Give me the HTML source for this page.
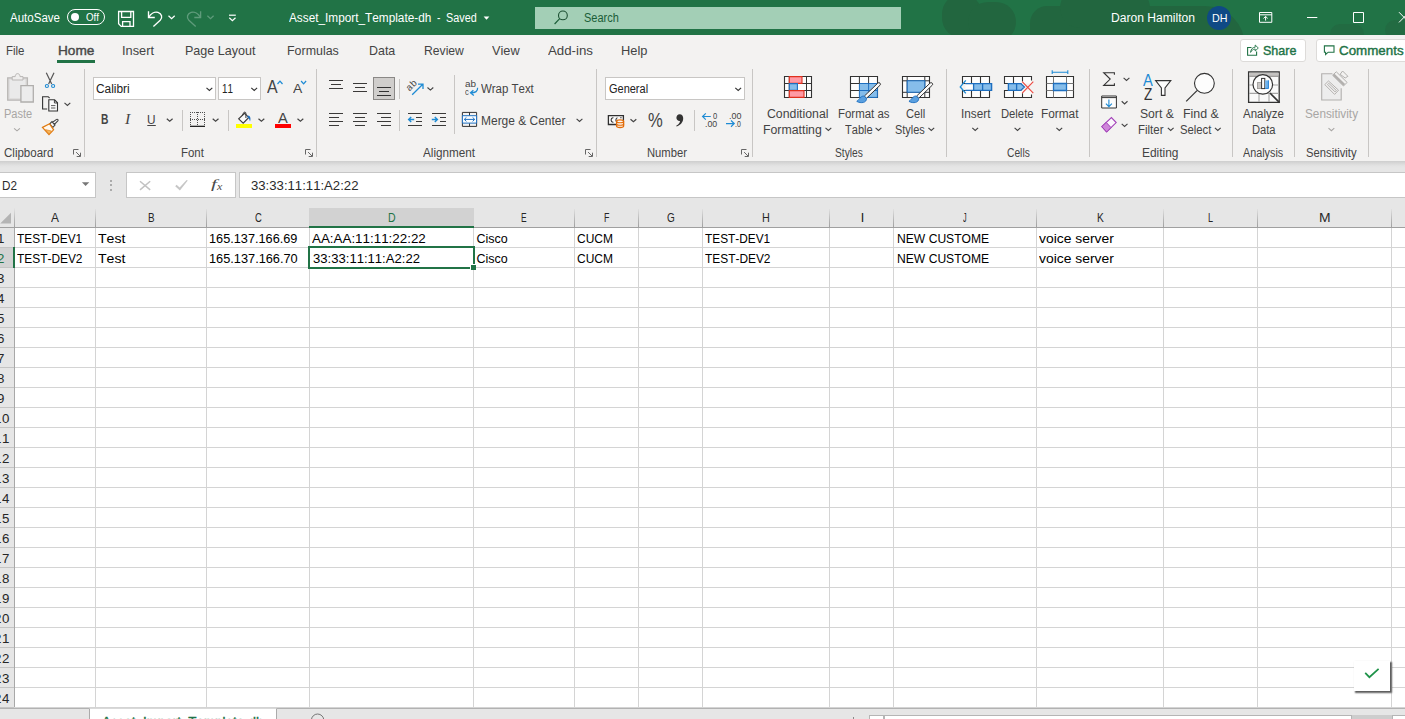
<!DOCTYPE html>
<html lang="en"><head><meta charset="utf-8"><title>Asset_Import_Template-dh - Excel</title>
<style>
html,body{margin:0;padding:0;}
body{width:1405px;height:719px;overflow:hidden;position:relative;background:#fff;
 font-family:"Liberation Sans",sans-serif;font-kerning:none;}
#app{position:absolute;left:0;top:0;width:1405px;height:719px;overflow:hidden;}
.b{position:absolute;box-sizing:border-box;}
.t{position:absolute;white-space:nowrap;line-height:20px;height:20px;transform-origin:0 50%;}
svg.ov{position:absolute;left:0;top:0;}
.sb{-webkit-text-stroke:0.4px currentColor;}
.sf{font-family:"Liberation Serif",serif;}
svg.ov{position:absolute;left:0;top:0;}
</style></head>
<body>
<div id="app">
<div class="b titlebar" style="left:0px;top:0px;width:1405px;height:35px;background:#217346;"></div>
<div class="b" style="left:942px;top:-6px;width:40px;height:44px;background:#22663f;border-radius:20px;"></div>
<div class="b" style="left:968px;top:2px;width:48px;height:40px;background:#22663f;border-radius:22px;"></div>
<div class="b" style="left:1030px;top:6px;width:215px;height:40px;background:#22663f;border-radius:26px 60px 0 0;"></div>
<div class="b" style="left:1060px;top:-12px;width:90px;height:40px;background:#22663f;border-radius:30px;"></div>
<div class="b" style="left:1330px;top:24px;width:34px;height:20px;background:#226b42;border-radius:10px;"></div>
<div class="b" style="left:1385px;top:20px;width:30px;height:20px;background:#226b42;border-radius:10px;"></div>
<span class="t" style="left:10.00px;top:8.00px;font-size:12px;color:#fff;transform:scaleX(0.9612);">AutoSave</span>
<div class="b" style="left:67px;top:9px;width:38px;height:16px;border:1.3px solid #fff;border-radius:8px;"></div>
<div class="b" style="left:71px;top:13px;width:8px;height:8px;background:#fff;border-radius:4px;"></div>
<span class="t" style="left:86.40px;top:8.00px;font-size:10px;color:#fff;transform:scaleX(0.9697);">Off</span>
<span class="t" style="left:289.00px;top:8.00px;font-size:12px;color:#fff;transform:scaleX(0.9833);">Asset_Import_Template-dh</span>
<span class="t" style="left:437.20px;top:8.00px;font-size:12px;color:#fff;transform:scaleX(0.8458);">-</span>
<span class="t" style="left:446.00px;top:8.00px;font-size:12px;color:#fff;transform:scaleX(0.9024);">Saved</span>
<div class="b" style="left:535px;top:7px;width:366px;height:22px;background:#a3cfb6;"></div>
<span class="t" style="left:584.20px;top:8.00px;font-size:12px;color:#1b5e38;transform:scaleX(0.9148);">Search</span>
<span class="t" style="left:1111.40px;top:8.00px;font-size:12px;color:#fff;transform:scaleX(1.0084);">Daron Hamilton</span>
<div class="b" style="left:1207px;top:6px;width:24px;height:24px;background:#0f4a85;border-radius:12px;"></div>
<span class="t" style="left:1211.50px;top:8.00px;font-size:11px;color:#fff;transform:scaleX(0.9751);">DH</span>
<div class="b ribbon" style="left:0px;top:35px;width:1405px;height:126px;background:#f3f2f1;"></div>
<span class="t" style="left:6.20px;top:41.00px;font-size:13px;color:#444;transform:scaleX(0.8839);">File</span>
<span class="t sb" style="left:57.50px;top:41.00px;font-size:13.2px;color:#484848;transform:scaleX(1.0356);">Home</span>
<div class="b" style="left:57px;top:60px;width:38px;height:3px;background:#217346;"></div>
<span class="t" style="left:122.00px;top:41.00px;font-size:13px;color:#444;transform:scaleX(0.9846);">Insert</span>
<span class="t" style="left:185.40px;top:41.00px;font-size:13px;color:#444;transform:scaleX(0.9658);">Page Layout</span>
<span class="t" style="left:286.50px;top:41.00px;font-size:13px;color:#444;transform:scaleX(0.9555);">Formulas</span>
<span class="t" style="left:368.70px;top:41.00px;font-size:13px;color:#444;transform:scaleX(0.9565);">Data</span>
<span class="t" style="left:424.00px;top:41.00px;font-size:13px;color:#444;transform:scaleX(0.9357);">Review</span>
<span class="t" style="left:491.80px;top:41.00px;font-size:13px;color:#444;transform:scaleX(0.9803);">View</span>
<span class="t" style="left:548.00px;top:41.00px;font-size:13px;color:#444;transform:scaleX(1.0211);">Add-ins</span>
<span class="t" style="left:621.30px;top:41.00px;font-size:13px;color:#444;transform:scaleX(0.9882);">Help</span>
<div class="b" style="left:1240px;top:39px;width:66px;height:23px;background:#fff;border:1px solid #dddbd9;border-radius:3px;"></div>
<span class="t sb" style="left:1263.20px;top:41.00px;font-size:13.2px;color:#217346;transform:scaleX(0.9505);">Share</span>
<div class="b" style="left:1316px;top:39px;width:100px;height:23px;background:#fff;border:1px solid #dddbd9;border-radius:3px;"></div>
<span class="t sb" style="left:1339.30px;top:41.00px;font-size:13.2px;color:#217346;transform:scaleX(1.0138);">Comments</span>
<div class="b" style="left:0px;top:161px;width:1405px;height:7px;background:linear-gradient(#cecece,#d9d9d9 35%,#e3e3e3 70%,#e6e6e6);"></div>
<div class="b" style="left:0px;top:168px;width:1405px;height:40px;background:#e6e6e6;"></div>
<div class="b" style="left:-1px;top:172px;width:97px;height:26px;background:#fff;border:1px solid #c6c6c6;"></div>
<span class="t" style="left:2.00px;top:176.00px;font-size:12.5px;color:#2b2b2b;transform:scaleX(0.9375);">D2</span>
<div class="b" style="left:110px;top:179.5px;width:2px;height:2px;background:#ababab;"></div>
<div class="b" style="left:110px;top:184px;width:2px;height:2px;background:#ababab;"></div>
<div class="b" style="left:110px;top:188.5px;width:2px;height:2px;background:#ababab;"></div>
<div class="b" style="left:126px;top:172px;width:110px;height:26px;background:#fff;border:1px solid #c6c6c6;"></div>
<div class="b" style="left:239px;top:172px;width:1170px;height:26px;background:#fff;border:1px solid #c6c6c6;"></div>
<span class="t" style="left:251.40px;top:176.00px;font-size:12.5px;color:#2b2b2b;transform:scaleX(1.0517);">33:33:11:11:A2:22</span>
<div class="b" style="left:0px;top:707px;width:1405px;height:12px;background:#e6e6e6;"></div>
<div class="b" style="left:0px;top:707px;width:1405px;height:1px;background:#a4a4a4;"></div>
<div class="b" style="left:0px;top:708px;width:1405px;height:1px;background:#b2b2b2;"></div>
<div class="b" style="left:89px;top:708px;width:188px;height:12px;background:#fff;border:1px solid #ababab;border-top:1px solid #d9d9d9;border-bottom:none;"></div>
<div class="b" style="left:90px;top:707px;width:186px;height:1px;background:#d0d0d0;"></div>
<span class="t sb" style="left:101.50px;top:712.00px;font-size:13px;color:#217346;transform:scaleX(1.0299);">Asset_Import_Template-dh</span>
<div class="b" style="left:869px;top:715px;width:15px;height:6px;background:#fff;border:1px solid #b5b5b5;"></div>
<div class="b" style="left:884px;top:715px;width:468px;height:6px;background:#fff;border:1px solid #b5b5b5;"></div>
<div class="b" style="left:1352px;top:715px;width:40px;height:6px;background:#cdcdcd;"></div>
<div class="b" style="left:1392px;top:715px;width:14px;height:6px;background:#fff;border:1px solid #b5b5b5;"></div>
<div class="b" style="left:852.5px;top:717px;width:1.5px;height:3px;background:#8a8a8a;"></div>
<span class="t" style="left:4.20px;top:104.00px;font-size:12px;color:#a8a6a4;transform:scaleX(0.9198);">Paste</span>
<span class="t" style="left:3.70px;top:143.00px;font-size:12px;color:#444;transform:scaleX(0.9599);">Clipboard</span>
<div class="b" style="left:84px;top:69px;width:1px;height:88px;background:#c8c6c4;"></div>
<div class="b" style="left:93px;top:77px;width:123px;height:23px;background:#fff;border:1px solid #c8c6c4;"></div>
<span class="t" style="left:96.10px;top:79.00px;font-size:12px;color:#222;transform:scaleX(0.9906);">Calibri</span>
<div class="b" style="left:218px;top:77px;width:43px;height:23px;background:#fff;border:1px solid #c8c6c4;"></div>
<span class="t" style="left:222.00px;top:79.00px;font-size:12px;color:#222;transform:scaleX(0.8173);">11</span>
<span class="t" style="left:180.90px;top:143.00px;font-size:12px;color:#444;transform:scaleX(0.9542);">Font</span>
<div class="b" style="left:316px;top:69px;width:1px;height:88px;background:#c8c6c4;"></div>
<div class="b" style="left:182px;top:110px;width:1px;height:21px;background:#c8c6c4;"></div>
<div class="b" style="left:228px;top:110px;width:1px;height:21px;background:#c8c6c4;"></div>
<div class="b" style="left:373px;top:77px;width:22px;height:23px;background:#d0cecc;border:1px solid #8a8886;"></div>
<div class="b" style="left:399px;top:79px;width:1px;height:20px;background:#c8c6c4;"></div>
<div class="b" style="left:399px;top:110px;width:1px;height:21px;background:#c8c6c4;"></div>
<div class="b" style="left:454px;top:75px;width:1px;height:59px;background:#c8c6c4;"></div>
<span class="t" style="left:481.40px;top:79.00px;font-size:12px;color:#444;transform:scaleX(0.9537);">Wrap Text</span>
<span class="t" style="left:481.40px;top:111.00px;font-size:12px;color:#444;transform:scaleX(0.9974);">Merge &amp; Center</span>
<span class="t" style="left:422.60px;top:143.00px;font-size:12px;color:#444;transform:scaleX(0.9768);">Alignment</span>
<div class="b" style="left:596px;top:69px;width:1px;height:88px;background:#c8c6c4;"></div>
<div class="b" style="left:605px;top:77px;width:140px;height:23px;background:#fff;border:1px solid #c8c6c4;"></div>
<span class="t" style="left:608.70px;top:79.00px;font-size:12px;color:#222;transform:scaleX(0.9153);">General</span>
<span class="t" style="left:647.60px;top:111.00px;font-size:19.3px;color:#444;transform:scaleX(0.8616);">%</span>
<div class="b" style="left:694px;top:110px;width:1px;height:21px;background:#c8c6c4;"></div>
<span class="t" style="left:646.80px;top:143.00px;font-size:12px;color:#444;transform:scaleX(0.9353);">Number</span>
<div class="b" style="left:752px;top:69px;width:1px;height:88px;background:#c8c6c4;"></div>
<span class="t" style="left:767.20px;top:104.00px;font-size:12px;color:#444;transform:scaleX(1.0240);">Conditional</span>
<span class="t" style="left:763.10px;top:120.00px;font-size:12px;color:#444;transform:scaleX(1.0251);">Formatting</span>
<span class="t" style="left:838.40px;top:104.00px;font-size:12px;color:#444;transform:scaleX(0.9537);">Format as</span>
<span class="t" style="left:845.40px;top:120.00px;font-size:12px;color:#444;transform:scaleX(0.9205);">Table</span>
<span class="t" style="left:906.40px;top:104.00px;font-size:12px;color:#444;transform:scaleX(0.9275);">Cell</span>
<span class="t" style="left:895.20px;top:120.00px;font-size:12px;color:#444;transform:scaleX(0.9113);">Styles</span>
<span class="t" style="left:835.40px;top:143.00px;font-size:12px;color:#444;transform:scaleX(0.8532);">Styles</span>
<div class="b" style="left:946px;top:69px;width:1px;height:88px;background:#c8c6c4;"></div>
<span class="t" style="left:960.90px;top:104.00px;font-size:12px;color:#444;transform:scaleX(0.9800);">Insert</span>
<span class="t" style="left:1001.30px;top:104.00px;font-size:12px;color:#444;transform:scaleX(0.9371);">Delete</span>
<span class="t" style="left:1041.20px;top:104.00px;font-size:12px;color:#444;transform:scaleX(0.9847);">Format</span>
<span class="t" style="left:1006.70px;top:143.00px;font-size:12px;color:#444;transform:scaleX(0.8539);">Cells</span>
<div class="b" style="left:1089px;top:69px;width:1px;height:88px;background:#c8c6c4;"></div>
<span class="t" style="left:1139.70px;top:104.00px;font-size:12px;color:#444;transform:scaleX(1.0132);">Sort &amp;</span>
<span class="t" style="left:1138.40px;top:120.00px;font-size:12px;color:#444;transform:scaleX(0.9572);">Filter</span>
<span class="t" style="left:1183.00px;top:104.00px;font-size:12px;color:#444;transform:scaleX(1.0323);">Find &amp;</span>
<span class="t" style="left:1180.30px;top:120.00px;font-size:12px;color:#444;transform:scaleX(0.9412);">Select</span>
<span class="t" style="left:1142.10px;top:143.00px;font-size:12px;color:#444;transform:scaleX(0.9940);">Editing</span>
<div class="b" style="left:1232px;top:69px;width:1px;height:88px;background:#c8c6c4;"></div>
<span class="t" style="left:1243.10px;top:104.00px;font-size:12px;color:#444;transform:scaleX(0.9574);">Analyze</span>
<span class="t" style="left:1252.10px;top:120.00px;font-size:12px;color:#444;transform:scaleX(0.9299);">Data</span>
<span class="t" style="left:1243.10px;top:143.00px;font-size:12px;color:#444;transform:scaleX(0.8993);">Analysis</span>
<div class="b" style="left:1294px;top:69px;width:1px;height:88px;background:#c8c6c4;"></div>
<span class="t" style="left:1304.80px;top:104.00px;font-size:12px;color:#a8a6a4;transform:scaleX(0.9815);">Sensitivity</span>
<span class="t" style="left:1306.40px;top:143.00px;font-size:12px;color:#444;transform:scaleX(0.9370);">Sensitivity</span>
<div class="b" style="left:1368px;top:69px;width:1px;height:88px;background:#c8c6c4;"></div>
<span class="t" style="left:100.60px;top:109.00px;font-size:14.5px;color:#444;transform:scaleX(0.7088);font-weight:bold;">B</span>
<span class="t sf" style="left:124.98px;top:109.00px;font-size:15px;color:#444;transform:scaleX(1.0526);font-style:italic;">I</span>
<span class="t" style="left:147.30px;top:110.00px;font-size:13.6px;color:#444;transform:scaleX(0.8681);">U</span>
<span class="t" style="left:267.00px;top:77.00px;font-size:18.3px;color:#444;transform:scaleX(0.8727);">A</span>
<span class="t" style="left:292.50px;top:79.00px;font-size:13.7px;color:#444;transform:scaleX(1.0132);">A</span>
<span class="t" style="left:278.40px;top:108.00px;font-size:15px;color:#444;transform:scaleX(0.9751);">A</span>
<span class="t" style="left:1143.20px;top:70.00px;font-size:16.3px;color:#1e8bd4;transform:scaleX(0.9065);">A</span>
<span class="t" style="left:1143.50px;top:84.00px;font-size:16.3px;color:#333;transform:scaleX(0.8348);">Z</span>
<span class="t" style="left:712.80px;top:106.00px;font-size:9px;color:#444;transform:scaleX(0.8408);">0</span>
<span class="t" style="left:704.80px;top:114.00px;font-size:9px;color:#444;transform:scaleX(0.9752);">.00</span>
<span class="t" style="left:728.80px;top:106.00px;font-size:9px;color:#444;transform:scaleX(0.9912);">.00</span>
<span class="t" style="left:735.40px;top:114.00px;font-size:9px;color:#444;transform:scaleX(0.7718);">.0</span>
<span class="t" style="left:464.80px;top:74.00px;font-size:9px;color:#444;transform:scaleX(1.1011);">ab</span>
<span class="t" style="left:464.80px;top:82.00px;font-size:9px;color:#444;transform:scaleX(0.8444);">c</span>
<span class="t sf" style="left:211.20px;top:174.00px;font-size:13.5px;color:#4a4a4a;transform:scaleX(1.5752);font-style:italic;">f</span>
<span class="t sf" style="left:217.38px;top:176.00px;font-size:11px;color:#4a4a4a;transform:scaleX(1.0870);font-style:italic;">x</span>
<div class="b" style="left:0px;top:228px;width:1405px;height:479px;background:#fff;"></div>
<div class="b" style="left:0px;top:208px;width:1405px;height:20px;background:#e6e6e6;"></div>
<div class="b" style="left:0px;top:228px;width:14px;height:479px;background:#e6e6e6;"></div>
<div class="b" style="left:0px;top:248px;width:14px;height:19px;background:#d2d2d2;"></div>
<div class="b" style="left:14px;top:247px;width:1391px;height:1px;background:#d4d4d4;"></div>
<div class="b" style="left:0px;top:247px;width:14px;height:1px;background:#c4c4c4;"></div>
<div class="b" style="left:14px;top:267px;width:1391px;height:1px;background:#d4d4d4;"></div>
<div class="b" style="left:0px;top:267px;width:14px;height:1px;background:#c4c4c4;"></div>
<div class="b" style="left:14px;top:287px;width:1391px;height:1px;background:#d4d4d4;"></div>
<div class="b" style="left:0px;top:287px;width:14px;height:1px;background:#c4c4c4;"></div>
<div class="b" style="left:14px;top:307px;width:1391px;height:1px;background:#d4d4d4;"></div>
<div class="b" style="left:0px;top:307px;width:14px;height:1px;background:#c4c4c4;"></div>
<div class="b" style="left:14px;top:327px;width:1391px;height:1px;background:#d4d4d4;"></div>
<div class="b" style="left:0px;top:327px;width:14px;height:1px;background:#c4c4c4;"></div>
<div class="b" style="left:14px;top:347px;width:1391px;height:1px;background:#d4d4d4;"></div>
<div class="b" style="left:0px;top:347px;width:14px;height:1px;background:#c4c4c4;"></div>
<div class="b" style="left:14px;top:367px;width:1391px;height:1px;background:#d4d4d4;"></div>
<div class="b" style="left:0px;top:367px;width:14px;height:1px;background:#c4c4c4;"></div>
<div class="b" style="left:14px;top:387px;width:1391px;height:1px;background:#d4d4d4;"></div>
<div class="b" style="left:0px;top:387px;width:14px;height:1px;background:#c4c4c4;"></div>
<div class="b" style="left:14px;top:407px;width:1391px;height:1px;background:#d4d4d4;"></div>
<div class="b" style="left:0px;top:407px;width:14px;height:1px;background:#c4c4c4;"></div>
<div class="b" style="left:14px;top:427px;width:1391px;height:1px;background:#d4d4d4;"></div>
<div class="b" style="left:0px;top:427px;width:14px;height:1px;background:#c4c4c4;"></div>
<div class="b" style="left:14px;top:447px;width:1391px;height:1px;background:#d4d4d4;"></div>
<div class="b" style="left:0px;top:447px;width:14px;height:1px;background:#c4c4c4;"></div>
<div class="b" style="left:14px;top:467px;width:1391px;height:1px;background:#d4d4d4;"></div>
<div class="b" style="left:0px;top:467px;width:14px;height:1px;background:#c4c4c4;"></div>
<div class="b" style="left:14px;top:487px;width:1391px;height:1px;background:#d4d4d4;"></div>
<div class="b" style="left:0px;top:487px;width:14px;height:1px;background:#c4c4c4;"></div>
<div class="b" style="left:14px;top:507px;width:1391px;height:1px;background:#d4d4d4;"></div>
<div class="b" style="left:0px;top:507px;width:14px;height:1px;background:#c4c4c4;"></div>
<div class="b" style="left:14px;top:527px;width:1391px;height:1px;background:#d4d4d4;"></div>
<div class="b" style="left:0px;top:527px;width:14px;height:1px;background:#c4c4c4;"></div>
<div class="b" style="left:14px;top:547px;width:1391px;height:1px;background:#d4d4d4;"></div>
<div class="b" style="left:0px;top:547px;width:14px;height:1px;background:#c4c4c4;"></div>
<div class="b" style="left:14px;top:567px;width:1391px;height:1px;background:#d4d4d4;"></div>
<div class="b" style="left:0px;top:567px;width:14px;height:1px;background:#c4c4c4;"></div>
<div class="b" style="left:14px;top:587px;width:1391px;height:1px;background:#d4d4d4;"></div>
<div class="b" style="left:0px;top:587px;width:14px;height:1px;background:#c4c4c4;"></div>
<div class="b" style="left:14px;top:607px;width:1391px;height:1px;background:#d4d4d4;"></div>
<div class="b" style="left:0px;top:607px;width:14px;height:1px;background:#c4c4c4;"></div>
<div class="b" style="left:14px;top:627px;width:1391px;height:1px;background:#d4d4d4;"></div>
<div class="b" style="left:0px;top:627px;width:14px;height:1px;background:#c4c4c4;"></div>
<div class="b" style="left:14px;top:647px;width:1391px;height:1px;background:#d4d4d4;"></div>
<div class="b" style="left:0px;top:647px;width:14px;height:1px;background:#c4c4c4;"></div>
<div class="b" style="left:14px;top:667px;width:1391px;height:1px;background:#d4d4d4;"></div>
<div class="b" style="left:0px;top:667px;width:14px;height:1px;background:#c4c4c4;"></div>
<div class="b" style="left:14px;top:687px;width:1391px;height:1px;background:#d4d4d4;"></div>
<div class="b" style="left:0px;top:687px;width:14px;height:1px;background:#c4c4c4;"></div>
<div class="b" style="left:14px;top:707px;width:1391px;height:1px;background:#d4d4d4;"></div>
<div class="b" style="left:0px;top:707px;width:14px;height:1px;background:#c4c4c4;"></div>
<div class="b" style="left:95px;top:228px;width:1px;height:479px;background:#d4d4d4;"></div>
<div class="b" style="left:206px;top:228px;width:1px;height:479px;background:#d4d4d4;"></div>
<div class="b" style="left:309px;top:228px;width:1px;height:479px;background:#d4d4d4;"></div>
<div class="b" style="left:473px;top:228px;width:1px;height:479px;background:#d4d4d4;"></div>
<div class="b" style="left:574px;top:228px;width:1px;height:479px;background:#d4d4d4;"></div>
<div class="b" style="left:638px;top:228px;width:1px;height:479px;background:#d4d4d4;"></div>
<div class="b" style="left:702px;top:228px;width:1px;height:479px;background:#d4d4d4;"></div>
<div class="b" style="left:829px;top:228px;width:1px;height:479px;background:#d4d4d4;"></div>
<div class="b" style="left:893px;top:228px;width:1px;height:479px;background:#d4d4d4;"></div>
<div class="b" style="left:1036px;top:228px;width:1px;height:479px;background:#d4d4d4;"></div>
<div class="b" style="left:1163px;top:228px;width:1px;height:479px;background:#d4d4d4;"></div>
<div class="b" style="left:1257px;top:228px;width:1px;height:479px;background:#d4d4d4;"></div>
<div class="b" style="left:1391px;top:228px;width:1px;height:479px;background:#d4d4d4;"></div>
<div class="b" style="left:95px;top:209px;width:1px;height:19px;background:linear-gradient(#e0e0e0,#b4b4b4 60%,#9e9e9e);"></div>
<div class="b" style="left:206px;top:209px;width:1px;height:19px;background:linear-gradient(#e0e0e0,#b4b4b4 60%,#9e9e9e);"></div>
<div class="b" style="left:309px;top:209px;width:1px;height:19px;background:linear-gradient(#e0e0e0,#b4b4b4 60%,#9e9e9e);"></div>
<div class="b" style="left:473px;top:209px;width:1px;height:19px;background:linear-gradient(#e0e0e0,#b4b4b4 60%,#9e9e9e);"></div>
<div class="b" style="left:574px;top:209px;width:1px;height:19px;background:linear-gradient(#e0e0e0,#b4b4b4 60%,#9e9e9e);"></div>
<div class="b" style="left:638px;top:209px;width:1px;height:19px;background:linear-gradient(#e0e0e0,#b4b4b4 60%,#9e9e9e);"></div>
<div class="b" style="left:702px;top:209px;width:1px;height:19px;background:linear-gradient(#e0e0e0,#b4b4b4 60%,#9e9e9e);"></div>
<div class="b" style="left:829px;top:209px;width:1px;height:19px;background:linear-gradient(#e0e0e0,#b4b4b4 60%,#9e9e9e);"></div>
<div class="b" style="left:893px;top:209px;width:1px;height:19px;background:linear-gradient(#e0e0e0,#b4b4b4 60%,#9e9e9e);"></div>
<div class="b" style="left:1036px;top:209px;width:1px;height:19px;background:linear-gradient(#e0e0e0,#b4b4b4 60%,#9e9e9e);"></div>
<div class="b" style="left:1163px;top:209px;width:1px;height:19px;background:linear-gradient(#e0e0e0,#b4b4b4 60%,#9e9e9e);"></div>
<div class="b" style="left:1257px;top:209px;width:1px;height:19px;background:linear-gradient(#e0e0e0,#b4b4b4 60%,#9e9e9e);"></div>
<div class="b" style="left:1391px;top:209px;width:1px;height:19px;background:linear-gradient(#e0e0e0,#b4b4b4 60%,#9e9e9e);"></div>
<div class="b" style="left:309px;top:208px;width:165px;height:19px;background:#d2d2d2;"></div>
<div class="b" style="left:14px;top:208px;width:1px;height:20px;background:linear-gradient(#e4e4e4,#b4b4b4 60%,#a2a2a2);"></div>
<div class="b" style="left:14px;top:228px;width:1px;height:479px;background:#a8a8a8;"></div>
<div class="b" style="left:0px;top:227px;width:1405px;height:1px;background:#a0a0a0;"></div>
<span class="t" style="left:51.00px;top:208.00px;font-size:12.5px;color:#262626;transform:scaleX(0.9552);">A</span>
<span class="t" style="left:147.70px;top:208.00px;font-size:12.5px;color:#262626;transform:scaleX(0.7940);">B</span>
<span class="t" style="left:254.60px;top:208.00px;font-size:12.5px;color:#262626;transform:scaleX(0.7556);">C</span>
<span class="t" style="left:387.70px;top:208.00px;font-size:12.5px;color:#217346;transform:scaleX(0.8444);">D</span>
<span class="t" style="left:521.20px;top:208.00px;font-size:12.5px;color:#262626;transform:scaleX(0.6737);">E</span>
<span class="t" style="left:603.80px;top:208.00px;font-size:12.5px;color:#262626;transform:scaleX(0.7082);">F</span>
<span class="t" style="left:666.60px;top:208.00px;font-size:12.5px;color:#262626;transform:scaleX(0.8000);">G</span>
<span class="t" style="left:762.10px;top:208.00px;font-size:12.5px;color:#262626;transform:scaleX(0.8667);">H</span>
<span class="t" style="left:860.80px;top:208.00px;font-size:12.5px;color:#111;">I</span>
<span class="t" style="left:963.20px;top:208.00px;font-size:12.5px;color:#262626;transform:scaleX(0.5760);">J</span>
<span class="t" style="left:1096.60px;top:208.00px;font-size:12.5px;color:#262626;transform:scaleX(0.8180);">K</span>
<span class="t" style="left:1208.00px;top:208.00px;font-size:12.5px;color:#262626;transform:scaleX(0.7207);">L</span>
<span class="t" style="left:1318.70px;top:208.00px;font-size:12.5px;color:#262626;transform:scaleX(1.1114);">M</span>
<div class="b" style="left:309px;top:226px;width:165px;height:2px;background:#217346;"></div>
<span class="t" style="left:-3.30px;top:229px;font-size:12.5px;color:#262626;transform:scaleX(1.0650);">1</span>
<span class="t" style="left:-3.30px;top:249px;font-size:12.5px;color:#217346;transform:scaleX(1.0650);">2</span>
<span class="t" style="left:-3.30px;top:269px;font-size:12.5px;color:#262626;transform:scaleX(1.0650);">3</span>
<span class="t" style="left:-3.30px;top:289px;font-size:12.5px;color:#262626;transform:scaleX(1.0650);">4</span>
<span class="t" style="left:-3.30px;top:309px;font-size:12.5px;color:#262626;transform:scaleX(1.0650);">5</span>
<span class="t" style="left:-3.30px;top:329px;font-size:12.5px;color:#262626;transform:scaleX(1.0650);">6</span>
<span class="t" style="left:-3.30px;top:349px;font-size:12.5px;color:#262626;transform:scaleX(1.0650);">7</span>
<span class="t" style="left:-3.30px;top:369px;font-size:12.5px;color:#262626;transform:scaleX(1.0650);">8</span>
<span class="t" style="left:-3.30px;top:389px;font-size:12.5px;color:#262626;transform:scaleX(1.0650);">9</span>
<span class="t" style="left:-5.60px;top:409px;font-size:12.5px;color:#262626;transform:scaleX(1.0650);">1</span>
<span class="t" style="left:1.80px;top:409px;font-size:12.5px;color:#262626;transform:scaleX(1.0650);">0</span>
<span class="t" style="left:-5.60px;top:429px;font-size:12.5px;color:#262626;transform:scaleX(1.0650);">1</span>
<span class="t" style="left:1.80px;top:429px;font-size:12.5px;color:#262626;transform:scaleX(1.0650);">1</span>
<span class="t" style="left:-5.60px;top:449px;font-size:12.5px;color:#262626;transform:scaleX(1.0650);">1</span>
<span class="t" style="left:1.80px;top:449px;font-size:12.5px;color:#262626;transform:scaleX(1.0650);">2</span>
<span class="t" style="left:-5.60px;top:469px;font-size:12.5px;color:#262626;transform:scaleX(1.0650);">1</span>
<span class="t" style="left:1.80px;top:469px;font-size:12.5px;color:#262626;transform:scaleX(1.0650);">3</span>
<span class="t" style="left:-5.60px;top:489px;font-size:12.5px;color:#262626;transform:scaleX(1.0650);">1</span>
<span class="t" style="left:1.80px;top:489px;font-size:12.5px;color:#262626;transform:scaleX(1.0650);">4</span>
<span class="t" style="left:-5.60px;top:509px;font-size:12.5px;color:#262626;transform:scaleX(1.0650);">1</span>
<span class="t" style="left:1.80px;top:509px;font-size:12.5px;color:#262626;transform:scaleX(1.0650);">5</span>
<span class="t" style="left:-5.60px;top:529px;font-size:12.5px;color:#262626;transform:scaleX(1.0650);">1</span>
<span class="t" style="left:1.80px;top:529px;font-size:12.5px;color:#262626;transform:scaleX(1.0650);">6</span>
<span class="t" style="left:-5.60px;top:549px;font-size:12.5px;color:#262626;transform:scaleX(1.0650);">1</span>
<span class="t" style="left:1.80px;top:549px;font-size:12.5px;color:#262626;transform:scaleX(1.0650);">7</span>
<span class="t" style="left:-5.60px;top:569px;font-size:12.5px;color:#262626;transform:scaleX(1.0650);">1</span>
<span class="t" style="left:1.80px;top:569px;font-size:12.5px;color:#262626;transform:scaleX(1.0650);">8</span>
<span class="t" style="left:-5.60px;top:589px;font-size:12.5px;color:#262626;transform:scaleX(1.0650);">1</span>
<span class="t" style="left:1.80px;top:589px;font-size:12.5px;color:#262626;transform:scaleX(1.0650);">9</span>
<span class="t" style="left:-5.60px;top:609px;font-size:12.5px;color:#262626;transform:scaleX(1.0650);">2</span>
<span class="t" style="left:1.80px;top:609px;font-size:12.5px;color:#262626;transform:scaleX(1.0650);">0</span>
<span class="t" style="left:-5.60px;top:629px;font-size:12.5px;color:#262626;transform:scaleX(1.0650);">2</span>
<span class="t" style="left:1.80px;top:629px;font-size:12.5px;color:#262626;transform:scaleX(1.0650);">1</span>
<span class="t" style="left:-5.60px;top:649px;font-size:12.5px;color:#262626;transform:scaleX(1.0650);">2</span>
<span class="t" style="left:1.80px;top:649px;font-size:12.5px;color:#262626;transform:scaleX(1.0650);">2</span>
<span class="t" style="left:-5.60px;top:669px;font-size:12.5px;color:#262626;transform:scaleX(1.0650);">2</span>
<span class="t" style="left:1.80px;top:669px;font-size:12.5px;color:#262626;transform:scaleX(1.0650);">3</span>
<span class="t" style="left:-5.60px;top:689px;font-size:12.5px;color:#262626;transform:scaleX(1.0650);">2</span>
<span class="t" style="left:1.80px;top:689px;font-size:12.5px;color:#262626;transform:scaleX(1.0650);">4</span>
<div class="b" style="left:13px;top:247px;width:2px;height:21px;background:#217346;"></div>
<span class="t" style="left:17.40px;top:229.00px;font-size:12.5px;color:#000;transform:scaleX(0.9477);">TEST-DEV1</span>
<span class="t" style="left:97.90px;top:229.00px;font-size:12.5px;color:#000;transform:scaleX(1.1292);">Test</span>
<span class="t" style="left:209.40px;top:229.00px;font-size:12.5px;color:#000;transform:scaleX(1.0176);">165.137.166.69</span>
<span class="t" style="left:476.40px;top:229.00px;font-size:12.5px;color:#000;">Cisco</span>
<span class="t" style="left:577.40px;top:229.00px;font-size:12.5px;color:#000;transform:scaleX(0.9600);">CUCM</span>
<span class="t" style="left:705.40px;top:229.00px;font-size:12.5px;color:#000;transform:scaleX(0.9477);">TEST-DEV1</span>
<span class="t" style="left:896.60px;top:229.00px;font-size:12.5px;color:#000;transform:scaleX(0.9691);">NEW CUSTOME</span>
<span class="t" style="left:1039.40px;top:229.00px;font-size:12.5px;color:#000;transform:scaleX(1.1117);">voice server</span>
<span class="t" style="left:17.40px;top:249.00px;font-size:12.5px;color:#000;transform:scaleX(0.9521);">TEST-DEV2</span>
<span class="t" style="left:97.90px;top:249.00px;font-size:12.5px;color:#000;transform:scaleX(1.1292);">Test</span>
<span class="t" style="left:209.40px;top:249.00px;font-size:12.5px;color:#000;transform:scaleX(1.0210);">165.137.166.70</span>
<span class="t" style="left:476.40px;top:249.00px;font-size:12.5px;color:#000;">Cisco</span>
<span class="t" style="left:577.40px;top:249.00px;font-size:12.5px;color:#000;transform:scaleX(0.9600);">CUCM</span>
<span class="t" style="left:705.40px;top:249.00px;font-size:12.5px;color:#000;transform:scaleX(0.9521);">TEST-DEV2</span>
<span class="t" style="left:896.60px;top:249.00px;font-size:12.5px;color:#000;transform:scaleX(0.9691);">NEW CUSTOME</span>
<span class="t" style="left:1039.40px;top:249.00px;font-size:12.5px;color:#000;transform:scaleX(1.1117);">voice server</span>
<span class="t" style="left:312.20px;top:229.00px;font-size:12.5px;color:#000;transform:scaleX(1.0699);">AA:AA:11:11:22:22</span>
<span class="t" style="left:312.60px;top:249.00px;font-size:12.5px;color:#000;transform:scaleX(1.0467);">33:33:11:11:A2:22</span>
<div class="b" style="left:308px;top:246px;width:167px;height:23px;border:2px solid #217346;"></div>
<div class="b" style="left:470px;top:264px;width:6px;height:6px;background:#fff;"></div>
<div class="b" style="left:471px;top:265px;width:5px;height:5px;background:#217346;"></div>
<div class="b" style="left:1354px;top:661px;width:36px;height:30px;background:#fff;box-shadow:1.5px 1.5px 1.5px 0.3px #606060;"></div>
<svg class="ov" width="1405" height="719" viewBox="0 0 1405 719">
<path d="M81.9 182.2h7.4l-3.7 3.9z" fill="#777"/>
<path d="M73.5 154.5V149.5h5" fill="none" stroke="#666" stroke-width="1"/><path d="M76.1 152.1l4 4M80.5 152.7v3.8h-3.8" fill="none" stroke="#666" stroke-width="1"/>
<path d="M305.5 154.5V149.5h5" fill="none" stroke="#666" stroke-width="1"/><path d="M308.1 152.1l4 4M312.5 152.7v3.8h-3.8" fill="none" stroke="#666" stroke-width="1"/>
<path d="M585.5 154.5V149.5h5" fill="none" stroke="#666" stroke-width="1"/><path d="M588.1 152.1l4 4M592.5 152.7v3.8h-3.8" fill="none" stroke="#666" stroke-width="1"/>
<path d="M741.5 154.5V149.5h5" fill="none" stroke="#666" stroke-width="1"/><path d="M744.1 152.1l4 4M748.5 152.7v3.8h-3.8" fill="none" stroke="#666" stroke-width="1"/>
<text transform="translate(409.6 91.4) rotate(-45)" font-family="Liberation Sans, sans-serif" font-size="9.5" letter-spacing="0.6" fill="#444">ab</text>
<path d="M11 212.8V223.6H0.2z" fill="#b4b4b4"/>
<path d="M1365.2 672.8l4.2 4.4 9.2-8.4" fill="none" stroke="#1e9248" stroke-width="1.7"/>
<path d="M118.6 11.5H133.5V26.4H121.2L118.6 23.8Z M121.6 11.5V17.3H130.8V11.5 M122.6 26.4V21.6H130V26.4" fill="none" stroke="#fff" stroke-width="1.3" />
<path d="M148.5 11.2V17.5H154.8" fill="none" stroke="#fff" stroke-width="1.35" />
<path d="M148.8 17.2C150.8 13.6 154.6 11.3 158 12.3C161.8 13.5 162.9 17.6 160.2 20.3L153.4 26.4" fill="none" stroke="#fff" stroke-width="1.35" />
<path d="M168.50 15.80 L171.60 18.60 L174.70 15.80" fill="none" stroke="#fff" stroke-width="1.25"/>
<path d="M200.6 11.2V17.5H194.3" fill="none" stroke="#5f9b7b" stroke-width="1.35" />
<path d="M200.3 17.2C198.3 13.6 194.5 11.3 191.1 12.3C187.3 13.5 186.2 17.6 188.9 20.3L195.7 26.4" fill="none" stroke="#5f9b7b" stroke-width="1.35" />
<path d="M207.40 15.80 L210.50 18.60 L213.60 15.80" fill="none" stroke="#5f9b7b" stroke-width="1.25"/>
<path d="M229 15.2H235.8" stroke="#fff" stroke-width="1.2"/>
<path d="M229.30 17.80 L232.40 20.60 L235.50 17.80" fill="none" stroke="#fff" stroke-width="1.25"/>
<path d="M483.6 16.6h5.8l-2.9 3.2z" fill="#fff"/>
<circle cx="562.9" cy="15.4" r="4.4" fill="none" stroke="#1c4f32" stroke-width="1.1"/>
<path d="M559.7 18.7L554.6 24" fill="none" stroke="#1b5e38" stroke-width="1.2" />
<path d="M1259.5 12.5H1271.8V22.3H1259.5Z M1259.5 14.8H1271.8" fill="none" stroke="#fff" stroke-width="1.0" />
<path d="M1265.6 20.6V16.6 M1263.5 18.4L1265.6 16.4L1267.7 18.4" fill="none" stroke="#fff" stroke-width="1.0" />
<path d="M1307 17.5H1317.3" stroke="#fff" stroke-width="1.0"/>
<path d="M1353.5 12.5H1363.5V22.5H1353.5Z" fill="none" stroke="#fff" stroke-width="1.0" />
<path d="M1399 12.2L1409 22.4 M1399 22.4L1409 12.2" fill="none" stroke="#fff" stroke-width="1.0" />
<path d="M1251.5 47.5H1247.6V55.2H1256.6V51.5" fill="none" stroke="#217346" stroke-width="1.1" />
<path d="M1250.6 52.4C1250.8 49.2 1252.6 47.2 1255.2 47.2V45L1258.3 48L1255.2 51V49C1253.2 49 1251.6 50.2 1250.6 52.4Z" fill="none" stroke="#217346" stroke-width="0.9" />
<path d="M1324.4 45.9H1334V52.2H1328.2L1325.6 54.6V52.2H1324.4Z" fill="none" stroke="#217346" stroke-width="1.1" />
<path d="M7.7 77.8H27.4V100.2H7.7Z" fill="#dcdbda" stroke="#b9b7b5" stroke-width="1.3" />
<path d="M9.7 79.6H25.4V98.2H9.7Z" fill="#eaeaea" stroke="none" stroke-width="0" />
<path d="M12.2 80V76.6H15.2C15.2 72.6 20 72.6 20 76.6H23V80Z" fill="#efeeed" stroke="#b9b7b5" stroke-width="1.0" />
<path d="M20.9 85.7H33.3V102H20.9Z" fill="#ececec" stroke="#b0aeac" stroke-width="1.3" />
<path d="M14.10 128.30 L17.00 130.90 L19.90 128.30" fill="none" stroke="#a8a6a4" stroke-width="1.05"/>
<path d="M46.3 72.8L51.7 84 M54 72.8L48.6 84" fill="none" stroke="#555" stroke-width="1.2" />
<circle cx="46.9" cy="86" r="1.55" fill="none" stroke="#1e8bd4" stroke-width="1.1"/>
<circle cx="53.1" cy="86" r="1.55" fill="none" stroke="#1e8bd4" stroke-width="1.1"/>
<path d="M47.2 109H42.6V96.7H48.2L49.6 98.2" fill="none" stroke="#333" stroke-width="1.1" />
<path d="M48.8 99.8H54.6L57.5 102.8V111H48.8Z" fill="#fafafa" stroke="#333" stroke-width="1.1" />
<path d="M54.4 100V103H57.4" fill="none" stroke="#333" stroke-width="0.9" />
<path d="M51 105.6H55.4 M51 108H55.4" fill="none" stroke="#333" stroke-width="0.8" />
<path d="M64.50 102.90 L67.40 105.50 L70.30 102.90" fill="none" stroke="#444" stroke-width="1.15"/>
<path d="M49.6 124L52 121.6L55 125L52.8 127.4Z" fill="#fafafa" stroke="#444" stroke-width="1.1" />
<path d="M52.6 122.2L56.6 119.4C57.6 118.8 58.6 120 57.8 120.9L54.4 124.4Z" fill="#fafafa" stroke="#444" stroke-width="1.1" />
<path d="M42.5 127.4L49.6 123.8L53.6 129.8L49 134.6Z" fill="#fff8ee" stroke="#e07a10" stroke-width="1.2" />
<path d="M45.4 129.6L51.6 131L49.2 134Z" fill="#f7b75a" stroke="#e07a10" stroke-width="0.6" />
<path d="M206.50 87.90 L209.40 90.50 L212.30 87.90" fill="none" stroke="#333" stroke-width="1.15"/>
<path d="M251.30 87.90 L254.20 90.50 L257.10 87.90" fill="none" stroke="#333" stroke-width="1.15"/>
<path d="M277.5 84L280 81.1L282.5 84" fill="none" stroke="#1e8bd4" stroke-width="1.25" />
<path d="M301.1 81L303.6 83.9L306.1 81" fill="none" stroke="#1e8bd4" stroke-width="1.25" />
<path d="M147.3 125.5H155.8" stroke="#444" stroke-width="1.0"/>
<path d="M166.80 118.70 L169.70 121.30 L172.60 118.70" fill="none" stroke="#444" stroke-width="1.15"/>
<rect x="190" y="112" width="1" height="1" fill="#505050"/>
<rect x="190" y="112" width="1" height="1" fill="#505050"/>
<rect x="204" y="112" width="1" height="1" fill="#505050"/>
<rect x="197" y="112" width="1" height="1" fill="#505050"/>
<rect x="190" y="119" width="1" height="1" fill="#505050"/>
<rect x="192" y="112" width="1" height="1" fill="#505050"/>
<rect x="190" y="114" width="1" height="1" fill="#505050"/>
<rect x="204" y="114" width="1" height="1" fill="#505050"/>
<rect x="197" y="114" width="1" height="1" fill="#505050"/>
<rect x="192" y="119" width="1" height="1" fill="#505050"/>
<rect x="194" y="112" width="1" height="1" fill="#505050"/>
<rect x="190" y="116" width="1" height="1" fill="#505050"/>
<rect x="204" y="116" width="1" height="1" fill="#505050"/>
<rect x="197" y="116" width="1" height="1" fill="#505050"/>
<rect x="194" y="119" width="1" height="1" fill="#505050"/>
<rect x="196" y="112" width="1" height="1" fill="#505050"/>
<rect x="190" y="118" width="1" height="1" fill="#505050"/>
<rect x="204" y="118" width="1" height="1" fill="#505050"/>
<rect x="197" y="118" width="1" height="1" fill="#505050"/>
<rect x="196" y="119" width="1" height="1" fill="#505050"/>
<rect x="198" y="112" width="1" height="1" fill="#505050"/>
<rect x="190" y="120" width="1" height="1" fill="#505050"/>
<rect x="204" y="120" width="1" height="1" fill="#505050"/>
<rect x="197" y="120" width="1" height="1" fill="#505050"/>
<rect x="198" y="119" width="1" height="1" fill="#505050"/>
<rect x="200" y="112" width="1" height="1" fill="#505050"/>
<rect x="190" y="122" width="1" height="1" fill="#505050"/>
<rect x="204" y="122" width="1" height="1" fill="#505050"/>
<rect x="197" y="122" width="1" height="1" fill="#505050"/>
<rect x="200" y="119" width="1" height="1" fill="#505050"/>
<rect x="202" y="112" width="1" height="1" fill="#505050"/>
<rect x="190" y="124" width="1" height="1" fill="#505050"/>
<rect x="204" y="124" width="1" height="1" fill="#505050"/>
<rect x="197" y="124" width="1" height="1" fill="#505050"/>
<rect x="202" y="119" width="1" height="1" fill="#505050"/>
<rect x="204" y="112" width="1" height="1" fill="#505050"/>
<rect x="204" y="119" width="1" height="1" fill="#505050"/>
<rect x="190" y="125.7" width="15" height="1.3" fill="#222"/>
<path d="M212.70 118.70 L215.60 121.30 L218.50 118.70" fill="none" stroke="#444" stroke-width="1.15"/>
<path d="M238.7 118.8L243.2 123.2L248.8 117.4L244.6 113.3Z" fill="#fafafa" stroke="#3a3a3a" stroke-width="1.1" />
<path d="M242.3 115.6L243.5 112.9C244.2 111.5 245.9 111.9 245.9 113.4V118" fill="none" stroke="#3a3a3a" stroke-width="1.0" />
<path d="M247.7 115.5C250.5 115.4 251 119 250 121.6C249.5 119.6 249 118.2 247.5 117.2Z" fill="#1e6fc0"/>
<rect x="236" y="124" width="16" height="4" fill="#ffff00"/>
<path d="M258.50 118.70 L261.40 121.30 L264.30 118.70" fill="none" stroke="#444" stroke-width="1.15"/>
<rect x="275" y="124" width="16" height="4" fill="#ff0000"/>
<path d="M297.50 118.70 L300.40 121.30 L303.30 118.70" fill="none" stroke="#444" stroke-width="1.15"/>
<rect x="329" y="80" width="14" height="1" fill="#3b3a39"/>
<rect x="331" y="84" width="10" height="1" fill="#3b3a39"/>
<rect x="329" y="88" width="14" height="1" fill="#3b3a39"/>
<rect x="353" y="83" width="14" height="1" fill="#3b3a39"/>
<rect x="355" y="87" width="10" height="1" fill="#3b3a39"/>
<rect x="353" y="91" width="14" height="1" fill="#3b3a39"/>
<rect x="377" y="87" width="14" height="1" fill="#333"/>
<rect x="379" y="91" width="10" height="1" fill="#333"/>
<rect x="377" y="95" width="14" height="1" fill="#333"/>
<path d="M412.2 94.8L422.8 84.3 M418 84.1H423V89.1" fill="none" stroke="#1e8bd4" stroke-width="1.3" />
<path d="M427.50 87.50 L430.40 90.10 L433.30 87.50" fill="none" stroke="#444" stroke-width="1.15"/>
<rect x="329" y="113" width="14" height="1" fill="#3b3a39"/>
<rect x="353" y="113" width="14" height="1" fill="#3b3a39"/>
<rect x="377" y="113" width="14" height="1" fill="#3b3a39"/>
<rect x="329" y="117" width="10" height="1" fill="#3b3a39"/>
<rect x="355" y="117" width="10" height="1" fill="#3b3a39"/>
<rect x="381" y="117" width="10" height="1" fill="#3b3a39"/>
<rect x="329" y="121" width="14" height="1" fill="#3b3a39"/>
<rect x="353" y="121" width="14" height="1" fill="#3b3a39"/>
<rect x="377" y="121" width="14" height="1" fill="#3b3a39"/>
<rect x="329" y="125" width="10" height="1" fill="#3b3a39"/>
<rect x="355" y="125" width="10" height="1" fill="#3b3a39"/>
<rect x="381" y="125" width="10" height="1" fill="#3b3a39"/>
<rect x="408" y="113" width="14" height="1" fill="#3b3a39"/>
<rect x="408" y="125" width="14" height="1" fill="#3b3a39"/>
<rect x="416" y="117" width="6" height="1" fill="#3b3a39"/>
<rect x="416" y="121" width="6" height="1" fill="#3b3a39"/>
<path d="M414.2 119.5H408.6 M411.2 116.9L408.6 119.5L411.2 122.1" fill="none" stroke="#1e8bd4" stroke-width="1.4" />
<rect x="432" y="113" width="14" height="1" fill="#3b3a39"/>
<rect x="432" y="125" width="14" height="1" fill="#3b3a39"/>
<rect x="440" y="117" width="6" height="1" fill="#3b3a39"/>
<rect x="440" y="121" width="6" height="1" fill="#3b3a39"/>
<path d="M431.8 119.5H437.4 M434.8 116.9L437.4 119.5L434.8 122.1" fill="none" stroke="#1e8bd4" stroke-width="1.4" />
<path d="M477.6 87.8C477.8 91.4 475.6 92.8 470.8 92.8 M473.4 90.2L470.5 92.8L473.8 95.6" fill="none" stroke="#1e8bd4" stroke-width="1.3" />
<path d="M462.4 112.4H476.6V126.4H462.4Z M469.5 112.4V115.6 M469.5 123.2V126.4" fill="none" stroke="#333" stroke-width="1.0" />
<path d="M462.4 115.7H476.6V123.1H462.4Z" fill="#fafdff" stroke="#1e6fc0" stroke-width="1.0" />
<path d="M464.4 119.4H474.6 M466.4 117.4L464.3 119.4L466.4 121.4 M472.6 117.4L474.7 119.4L472.6 121.4" fill="none" stroke="#1e6fc0" stroke-width="1.0" />
<path d="M576.60 118.90 L579.50 121.50 L582.40 118.90" fill="none" stroke="#444" stroke-width="1.15"/>
<path d="M735.30 87.90 L738.20 90.50 L741.10 87.90" fill="none" stroke="#333" stroke-width="1.15"/>
<path d="M608.4 115.7H623.4V124.5H608.4Z" fill="#fafafa" stroke="#2f2f2f" stroke-width="1.3" />
<path d="M613.4 117.8C610.4 117.4 610.4 122.6 613.4 122.2 M617.2 122.4C615.4 121 615.4 118.8 617.4 117.6 M620.2 117.8H621.6" fill="none" stroke="#2f2f2f" stroke-width="1.1" />
<path d="M616.6 121.4V126C616.6 128 623.6 128 623.6 126V121.4C623.6 119.4 616.6 119.4 616.6 121.4Z" fill="#fffaf2" stroke="#e36c09" stroke-width="1.3" />
<path d="M616.6 121.4C616.6 123.2 623.6 123.2 623.6 121.4 M616.6 123.9C616.6 125.7 623.6 125.7 623.6 123.9" fill="none" stroke="#e36c09" stroke-width="1.2" />
<path d="M630.50 119.20 L633.40 121.80 L636.30 119.20" fill="none" stroke="#444" stroke-width="1.15"/>
<path d="M679.6 114.2C682 114.2 683.4 116.2 683.2 118.8C682.9 122.6 680.2 125.4 676.6 126.6L676.2 125.8C678.6 124.6 680 122.8 680 121C678 121.2 676.4 119.8 676.4 117.8C676.4 115.8 677.8 114.2 679.6 114.2Z" fill="#333"/>
<path d="M710.8 116.5H702.8 M705.8 113.4L702.6 116.5L705.8 119.6" fill="none" stroke="#1e8bd4" stroke-width="1.2" />
<path d="M726 123.6H734 M731 120.5L734.2 123.6L731 126.7" fill="none" stroke="#1e8bd4" stroke-width="1.2" />
<path d="M784.5 76.5H811.5V97.5H784.5Z" fill="#fdfdfd" stroke="#333" stroke-width="1.1" />
<path d="M784.5 83.5H811.5 M784.5 90.5H811.5 M789.3 76.5V97.5 M806.5 76.5V97.5" fill="none" stroke="#333" stroke-width="1.0" />
<path d="M789.3 76.6H802V83.4H789.3Z" fill="#ff9aa5" stroke="#e0301e" stroke-width="1.1" />
<path d="M789.3 83.6H797.4V90.4H789.3Z" fill="#86bdea" stroke="#1e6fc0" stroke-width="1.1" />
<path d="M789.3 90.6H804V97.4H789.3Z" fill="#ff9aa5" stroke="#e0301e" stroke-width="1.1" />
<path d="M825.50 127.90 L828.40 130.50 L831.30 127.90" fill="none" stroke="#444" stroke-width="1.15"/>
<path d="M850.5 76.5H877.5V97.5H850.5Z" fill="#fdfdfd" stroke="#333" stroke-width="1.1" />
<path d="M859.4 83.5H877.4V97.4H859.4Z" fill="#86bdea" stroke="#1e6fc0" stroke-width="1.0" />
<path d="M850.5 83.5H859.4 M850.5 90.5H859.4 M859.4 76.5V83.5 M868.6 76.5V83.5" fill="none" stroke="#333" stroke-width="1.0" />
<path d="M859.4 90.5H877.4 M868.6 83.5V97.4" fill="none" stroke="#1e6fc0" stroke-width="1.0" />
<path d="M879.95 85.30L866.45 98.30L864.35 96.10L877.85 83.10A1.5 1.5 0 0 1 879.95 85.30Z" fill="#fbfbfb" stroke="#333" stroke-width="1.0" />
<path d="M864.35 96.10C860.95 95.50 859.75 99.10 856.75 101.40C860.95 103.70 866.85 102.90 866.45 98.30Z" fill="#5aa0e0" stroke="#1e6fc0" stroke-width="0.9" />
<path d="M875.60 127.90 L878.50 130.50 L881.40 127.90" fill="none" stroke="#444" stroke-width="1.15"/>
<path d="M902.5 76.5H929.5V97.5H902.5Z" fill="#fdfdfd" stroke="#333" stroke-width="1.1" />
<path d="M902.5 80.8H929.5 M902.5 92.3H929.5 M907.2 76.5V97.5 M924.8 76.5V97.5" fill="none" stroke="#333" stroke-width="1.0" />
<path d="M907.2 80.8H924.8V92.3H907.2Z" fill="#86bdea" stroke="#1e6fc0" stroke-width="1.1" />
<path d="M932.15 85.30L918.65 98.30L916.55 96.10L930.05 83.10A1.5 1.5 0 0 1 932.15 85.30Z" fill="#fbfbfb" stroke="#333" stroke-width="1.0" />
<path d="M916.55 96.10C913.15 95.50 911.95 99.10 908.95 101.40C913.15 103.70 919.05 102.90 918.65 98.30Z" fill="#5aa0e0" stroke="#1e6fc0" stroke-width="0.9" />
<path d="M928.40 127.90 L931.30 130.50 L934.20 127.90" fill="none" stroke="#444" stroke-width="1.15"/>
<path d="M962.5 76.5H989.5V83.5H962.5Z M962.5 90.5H989.5V97.5H962.5Z M971.5 76.5V83.5 M980.5 76.5V83.5 M971.5 90.5V97.5 M980.5 90.5V97.5" fill="#fdfdfd" stroke="#333" stroke-width="1.1" />
<path d="M965.4 83.6H991.5V90.4H965.4" fill="#fdfdfd" stroke="#1e6fc0" stroke-width="1.3" />
<path d="M973.6 83.6H991.5V90.4H973.6Z M982.6 83.6V90.4" fill="#86bdea" stroke="#1e6fc0" stroke-width="1.3" />
<path d="M965.8 80.4L960.3 86.9L965.8 93.4" fill="none" stroke="#1e8bd4" stroke-width="1.4" />
<path d="M972.30 127.90 L975.20 130.50 L978.10 127.90" fill="none" stroke="#444" stroke-width="1.15"/>
<path d="M1004.5 76.5H1031.5V83.5H1004.5Z M1004.5 90.5H1031.5V97.5H1004.5Z" fill="#fdfdfd"/>
<path d="M1031.5 80.6V76.5H1004.5V83.5H1021.4 M1031.5 94.4V97.5H1004.5V90.5H1021.4 M1013.5 76.5V83.5 M1022.5 76.5V81.4 M1013.5 90.5V97.5 M1022.5 93.2V97.5" fill="none" stroke="#333" stroke-width="1.1" />
<rect x="1023.2" y="80" width="10" height="14" fill="#f3f2f1" opacity="0.0"/>
<path d="M1008.4 83.6H1020.8L1024.4 87L1020.8 90.4H1008.4Z M1016.6 83.6V90.4" fill="#86bdea" stroke="#1e6fc0" stroke-width="1.3" />
<path d="M1022.2 81.6L1033.3 93.2 M1033.3 81.6L1022.2 93.2" fill="none" stroke="#ee4a42" stroke-width="1.15" />
<path d="M1014.60 127.90 L1017.50 130.50 L1020.40 127.90" fill="none" stroke="#444" stroke-width="1.15"/>
<path d="M1046.5 76.5H1073.5V97.5H1046.5Z" fill="#fdfdfd" stroke="#333" stroke-width="1.1" />
<path d="M1046.5 83.5H1073.5 M1046.5 90.5H1073.5 M1053.5 76.5V97.5 M1066.5 76.5V97.5" fill="none" stroke="#777" stroke-width="1.0" />
<path d="M1053.5 83.5H1066.5V90.5H1053.5Z" fill="#86bdea" stroke="#1e6fc0" stroke-width="1.3" />
<path d="M1052.2 72.2H1067.8 M1052.2 70.3V74.1 M1067.8 70.3V74.1" fill="none" stroke="#1e8bd4" stroke-width="1.1" />
<path d="M1056.40 127.90 L1059.30 130.50 L1062.20 127.90" fill="none" stroke="#444" stroke-width="1.15"/>
<path d="M1114.4 74.8V72.7H1103.7L1110.2 79.1L1103.7 85.4H1114.4V83.3" fill="none" stroke="#333" stroke-width="1.1" />
<path d="M1123.60 77.90 L1126.50 80.50 L1129.40 77.90" fill="none" stroke="#444" stroke-width="1.15"/>
<path d="M1101.7 96H1116.4V108H1101.7Z M1101.7 97.6H1116.4" fill="#fdfdfd" stroke="#333" stroke-width="1.0" />
<path d="M1108.9 99.4V106.4 M1105.9 103.6L1108.9 106.6L1111.9 103.6" fill="none" stroke="#1e8bd4" stroke-width="1.1" />
<path d="M1121.70 101.30 L1124.60 103.90 L1127.50 101.30" fill="none" stroke="#444" stroke-width="1.15"/>
<path d="M1101.8 126.6L1111.4 117.6L1116.2 122.6L1106.6 132Z" fill="#fbf6fc" stroke="#a240b8" stroke-width="1.1" />
<path d="M1101.8 126.6L1106.2 122.4L1111 127.6L1106.6 132Z" fill="#cf86da" stroke="#a240b8" stroke-width="1.0" />
<path d="M1121.70 123.90 L1124.60 126.50 L1127.50 123.90" fill="none" stroke="#444" stroke-width="1.15"/>
<path d="M1155.6 80.6H1170.8L1165 88V95.4H1161.4V88Z" fill="#fdfdfd" stroke="#333" stroke-width="1.1" />
<path d="M1167.80 127.90 L1170.70 130.50 L1173.60 127.90" fill="none" stroke="#444" stroke-width="1.15"/>
<circle cx="1204.4" cy="83.3" r="9.9" fill="#fdfdfd" stroke="#333" stroke-width="1.1"/>
<path d="M1197 90.6L1186.2 101.4" fill="none" stroke="#333" stroke-width="1.2" />
<path d="M1214.90 127.90 L1217.80 130.50 L1220.70 127.90" fill="none" stroke="#444" stroke-width="1.15"/>
<path d="M1248.6 72H1279.2V102.4H1248.6Z" fill="#fafafa" stroke="#333" stroke-width="1.3" />
<rect x="1249.2" y="72.6" width="29.4" height="3" fill="#c4c2c0"/>
<rect x="1249.2" y="75.6" width="29.4" height="1.2" fill="#8a8886"/>
<path d="M1249 85H1279 M1249 93.4H1279 M1259 93.4V102 M1269 93.4V102" fill="none" stroke="#a6a6a6" stroke-width="1.1" />
<circle cx="1262.8" cy="84.4" r="9.8" fill="#fdfdfd" stroke="#333" stroke-width="1.2"/>
<rect x="1257.6" y="82.6" width="3.8" height="6" fill="#c8c6c4" stroke="#969492" stroke-width="0.8"/>
<rect x="1261.6" y="78.4" width="3.2" height="10.2" fill="#fff" stroke="#333" stroke-width="1"/>
<rect x="1265.2" y="80.4" width="3.6" height="8.4" fill="#6fb2ec"/>
<path d="M1268.4 80.4V88.4H1265.2" fill="none" stroke="#1e7fd6" stroke-width="0.9"/>
<path d="M1270 93L1279.6 102.6" fill="none" stroke="#333" stroke-width="1.6" />
<path d="M1321.7 73.7H1333L1341.2 82V100H1321.7Z" fill="#ededed"/>
<path d="M1332.4 73.7H1321.7V100H1341.2V88.3" fill="none" stroke="#b2b0ae" stroke-width="1.1" />
<path d="M1328.5 81L1338.5 90.2L1334.6 94.4L1324.8 84.6Z" fill="#f3f2f1" stroke="#b2b0ae" stroke-width="1.0" />
<path d="M1328.7 83.2L1336.5 90.5L1334.9 91.9L1327.4 84.6Z" fill="#e6e6e6" stroke="#b2b0ae" stroke-width="0.9" />
<path d="M1336.3 71.8L1347.1 82.4L1343.5 86L1332.6 75.2Z" fill="#f3f2f1" stroke="#b2b0ae" stroke-width="1.0" />
<path d="M1332.8 75.5L1343.3 85.8L1345.1 84.1L1334.5 73.8Z" fill="#b2b0ae"/>
<path d="M1342.6 71L1347.9 76.3L1345.2 78L1340.1 74.3Z" fill="#f3f2f1" stroke="#b2b0ae" stroke-width="1.0" />
<path d="M1328.50 128.10 L1331.40 130.70 L1334.30 128.10" fill="none" stroke="#a8a6a4" stroke-width="1.05"/>
<path d="M140 181.2L150.2 189.9 M150.2 181.2L140 189.9" fill="none" stroke="#c2c2c2" stroke-width="1.5" />
<path d="M175.2 186.2L176.6 184.8L179.6 187.6L186.6 180L187.8 180.6L179.9 190.6Z" fill="#c6c6c6"/>
<circle cx="317.6" cy="720.2" r="6.2" fill="none" stroke="#767676" stroke-width="1"/>
</svg>
</div>
</body></html>
